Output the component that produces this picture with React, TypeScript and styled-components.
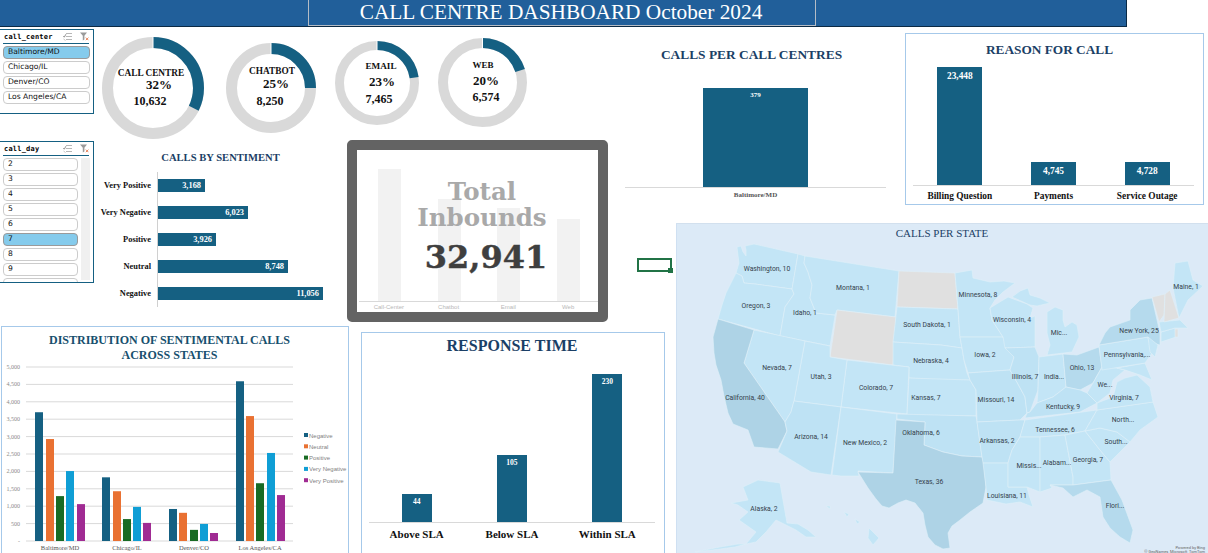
import React from "react";
import styled, { createGlobalStyle } from "styled-components";

const TEAL = "#156082";
const NAVY = "#1b3f66";
const SERIF = `"Liberation Serif", "Times New Roman", serif`;

const Global = createGlobalStyle`
  html, body { margin: 0; padding: 0; background: #fff; overflow: hidden; }
  body { width: 1208px; height: 553px; font-family: ${SERIF}; }
`;

const Page = styled.div`
  width: 1208px;
  height: 553px;
  overflow: hidden;
  display: flex;
  flex-direction: column;
`;

const Banner = styled.header`
  width: 1127px;
  height: 27px;
  box-sizing: border-box;
  flex: none;
  background: #215f9a;
  border-bottom: 1px solid #0b2a45;
  border-right: 1px solid #0b2a45;
  padding-left: 308px;
`;

const BannerTitle = styled.h1`
  margin: 0;
  width: 508px;
  height: 25.5px;
  box-sizing: border-box;
  border: 1px solid #b4bcc6;
  border-top: none;
  padding-right: 2px;
  color: #fff;
  font: 400 21.3px/24px ${SERIF};
  text-align: center;
  white-space: nowrap;
`;

const Board = styled.main`
  display: grid;
  grid-template-columns: 625px 51px 532px;
  grid-template-rows: 196px 102px 228px;
  flex: 1;
  grid-template-areas:
    "left top top"
    "left cell map"
    "bottom bottom map";
`;

const LeftArea = styled.section`
  grid-area: left;
  display: flex;
`;

const SlicerColumn = styled.div`
  width: 94px;
  flex: none;
  padding-top: 2px;
  display: flex;
  flex-direction: column;
  gap: 27px;
`;

const Slicer = styled.div<{ $h: number }>`
  width: 94px;
  height: ${(p) => p.$h}px;
  box-sizing: border-box;
  border: 1px solid ${TEAL};
  border-left: none;
  padding: 0 3px 0 3px;
  overflow: hidden;
  background: #fff;
`;

const SlicerHead = styled.div`
  height: 13px;
  margin-right: 1px;
  border-bottom: 1px solid ${TEAL};
  display: flex;
  align-items: center;
  justify-content: space-between;
  padding-left: 1px;
`;

const SlicerName = styled.span`
  font: 700 7px/10px "DejaVu Sans Mono", monospace;
  letter-spacing: 0.2px;
  color: #000;
`;

const SlicerIcons = styled.span`
  display: flex;
  gap: 8px;
  align-items: center;
`;

const SlicerBody = styled.div`
  display: flex;
  gap: 3px;
  margin-top: 2px;
`;

const SlicerList = styled.div<{ $gap: number }>`
  flex: 1;
  display: flex;
  flex-direction: column;
  gap: ${(p) => p.$gap}px;
`;

const SlicerButton = styled.div<{ $active?: boolean; $h: number }>`
  height: ${(p) => p.$h}px;
  flex: none;
  box-sizing: border-box;
  border: 1px solid ${(p) => (p.$active ? "#9a9a9a" : "#cccccc")};
  border-radius: 4px;
  background: ${(p) => (p.$active ? "#85cbec" : "#fff")};
  padding-left: 4px;
  font: 400 7.6px/10px "DejaVu Sans", sans-serif;
  color: #111;
  white-space: nowrap;
`;

const ScrollTrack = styled.div`
  width: 9px;
  height: 122px;
  flex: none;
  background: #f0f0f0;
`;

const CenterColumn = styled.div`
  flex: 1;
  min-width: 0;
  display: flex;
  flex-direction: column;
`;

const DonutRow = styled.div`
  height: 113px;
  flex: none;
  display: flex;
  align-items: flex-start;
  padding-left: 8px;
`;

const DonutWrap = styled.svg<{ $top: number; $gap: number }>`
  flex: none;
  margin-top: ${(p) => p.$top}px;
  margin-right: ${(p) => p.$gap}px;
  display: block;
`;

const LowerRow = styled.div`
  display: flex;
  flex: 1;
`;

const SentimentPanel = styled.div`
  width: 253px;
  flex: none;
  padding-top: 12px;
`;

const PanelTitle = styled.h2<{ $size: number; $shift?: number }>`
  margin: 0;
  padding-right: ${(p) => p.$shift || 0}px;
  text-align: center;
  font: 700 ${(p) => p.$size}px/1.15 ${SERIF};
  color: ${NAVY};
  white-space: nowrap;
`;

const SentimentChart = styled.div`
  display: grid;
  grid-template-columns: 57px 1fr;
  grid-auto-rows: 27px;
  margin-top: 8px;
`;

const SentimentLabel = styled.div`
  display: flex;
  align-items: center;
  justify-content: flex-end;
  font: 700 8.4px/10px ${SERIF};
  color: #111;
  white-space: nowrap;
`;

const SentimentTrack = styled.div`
  margin-left: 6px;
  border-left: 1px solid #d0d0d0;
  display: flex;
  align-items: center;
`;

const HBar = styled.div<{ $w: number }>`
  width: ${(p) => p.$w}px;
  height: 13px;
  background: ${TEAL};
  color: #fff;
  display: flex;
  align-items: center;
  justify-content: flex-end;
  padding-right: 4px;
  box-sizing: border-box;
  font: 700 8.4px/10px ${SERIF};
`;

const InboundCard = styled.div`
  width: 261px;
  height: 182px;
  flex: none;
  box-sizing: border-box;
  border: 10px solid #636363;
  border-radius: 5px;
  background: #fff;
  position: relative;
  overflow: hidden;
`;

const GhostPlot = styled.div`
  height: 152px;
  margin-left: 2px;
  padding-left: 1px;
  border-bottom: 1px solid #d9d9d9;
  display: grid;
  grid-template-columns: repeat(4, 1fr);
  align-items: end;
  justify-items: center;
  box-sizing: border-box;
`;

const GhostBar = styled.div<{ $h: number }>`
  width: 23px;
  height: ${(p) => p.$h}px;
  background: #f2f2f2;
`;

const GhostLabels = styled.div`
  margin-left: 2px;
  display: grid;
  grid-template-columns: repeat(4, 1fr);
  justify-items: center;
  font: 400 6px/10px "Liberation Sans", Arial, sans-serif;
  color: #b8b8b8;
`;

const InboundOverlay = styled.div`
  position: absolute;
  inset: 0;
  display: flex;
  flex-direction: column;
  align-items: center;
  padding-top: 29px;
`;

const InboundCaption = styled.div`
  margin-left: 9px;
  font: 700 24.5px/25.5px "DejaVu Serif", serif;
  color: #a9a9a9;
  text-align: center;
`;

const InboundValue = styled.div`
  margin-top: 9px;
  margin-left: 17px;
  font: 700 32px/36px "DejaVu Serif", serif;
  color: #3f3f3f;
  -webkit-text-stroke: 0.4px #3f3f3f;
`;

const TopArea = styled.section`
  grid-area: top;
  display: flex;
  gap: 19px;
`;

const CenterChart = styled.div`
  width: 261px;
  flex: none;
  padding-top: 20px;
`;

const ColumnPlot = styled.div<{ $h: number; $top: number }>`
  height: ${(p) => p.$h}px;
  margin-top: ${(p) => p.$top}px;
  border-bottom: 1px solid #d9d9d9;
  display: flex;
  align-items: flex-end;
`;

const ColumnSlot = styled.div`
  flex: 1;
  display: flex;
  justify-content: center;
`;

const ColumnBar = styled.div<{ $w: number; $h: number; $size: number; $pad: number }>`
  width: ${(p) => p.$w}px;
  height: ${(p) => p.$h}px;
  background: ${TEAL};
  color: #fff;
  text-align: center;
  box-sizing: border-box;
  padding-top: ${(p) => p.$pad}px;
  font: 700 ${(p) => p.$size}px/10px ${SERIF};
`;

const AxisLabels = styled.div<{ $size: number; $color: string; $top: number }>`
  display: flex;
  margin-top: ${(p) => p.$top}px;
  font: 700 ${(p) => p.$size}px/1.2 ${SERIF};
  color: ${(p) => p.$color};
`;

const AxisLabel = styled.div`
  flex: 1;
  text-align: center;
  white-space: nowrap;
`;

const ReasonBox = styled.div`
  width: 299px;
  height: 172px;
  flex: none;
  margin-top: 6px;
  box-sizing: border-box;
  border: 1px solid #a6c9ea;
  padding: 8px 9px 0 7px;
`;

const CellArea = styled.div`
  grid-area: cell;
  padding: 35px 0 0 12px;
`;

const ActiveCell = styled.div`
  width: 35px;
  height: 14px;
  box-sizing: border-box;
  border: 2px solid #217346;
  position: relative;
  &::after {
    content: "";
    position: absolute;
    right: -3px;
    bottom: -3px;
    width: 5px;
    height: 5px;
    background: #217346;
  }
`;

const BottomArea = styled.section`
  grid-area: bottom;
  display: flex;
  align-items: flex-start;
  gap: 12px;
  padding-left: 1px;
`;

const DistributionBox = styled.div`
  width: 348px;
  height: 232px;
  flex: none;
  margin-top: 1px;
  box-sizing: border-box;
  border: 1px solid #a6c9ea;
  padding-top: 6px;
  overflow: hidden;
`;

const DistributionTitle = styled.h2`
  margin: 0 0 1px;
  padding-right: 11px;
  text-align: center;
  font: 700 12px/15px ${SERIF};
  color: #17506e;
`;

const ResponseBox = styled.div`
  width: 304px;
  height: 230px;
  flex: none;
  margin-top: 7px;
  box-sizing: border-box;
  border: 1px solid #a6c9ea;
  padding: 4px 9px 0 7px;
`;

const MapPanel = styled.section`
  grid-area: map;
  background: #dceaf7;
  border-top: 1px solid #d2e0ee;
  border-left: 1px solid #cfe0f2;
  overflow: hidden;
`;

const MapSvg = styled.svg`
  display: block;
`;

function FilterIcons() {
  return (
    <SlicerIcons>
      <svg width="9" height="9" viewBox="0 0 9 9" fill="none">
        <path d="M3 1.5h6M3 4.5h6M3 7.5h6" stroke="#a5a5a5" strokeWidth="0.8" />
        <path d="M0.3 4l1 1.2 1.6-3" stroke="#777" strokeWidth="0.8" />
        <path d="M0.5 7l2 1.5" stroke="#aaa" strokeWidth="0.7" />
      </svg>
      <svg width="9" height="9" viewBox="0 0 9 9">
        <path d="M0 0.5h7L4.4 3.7V7.6L2.8 8.4V3.7z" fill="#9a9a9a" />
        <path d="M5.8 5.6l2.6 2.6M8.4 5.6l-2.6 2.6" stroke="#e8865f" strokeWidth="1" />
      </svg>
    </SlicerIcons>
  );
}

type Txt = { t: string; x: number; y: number; s: number };

function Donut(props: {
  d: number;
  w: number;
  pct: number;
  top: number;
  gap: number;
  texts: Txt[];
}) {
  const { d, w, pct, top, gap, texts } = props;
  const r = (d - w) / 2;
  const c = 2 * Math.PI * r;
  return (
    <DonutWrap width={d} height={d} viewBox={`0 0 ${d} ${d}`} $top={top} $gap={gap}>
      <circle cx={d / 2} cy={d / 2} r={r} fill="none" stroke="#d9d9d9" strokeWidth={w} />
      <circle
        cx={d / 2}
        cy={d / 2}
        r={r}
        fill="none"
        stroke={TEAL}
        strokeWidth={w}
        strokeDasharray={`${(c * pct) / 100} ${c}`}
        transform={`rotate(-90 ${d / 2} ${d / 2})`}
      />
      <line x1={d / 2} y1="0" x2={d / 2} y2={w} stroke="#fff" strokeWidth="1" />
      {texts.map((x) => (
        <text
          key={x.t}
          x={x.x}
          y={x.y}
          fontFamily={SERIF}
          fontWeight="700"
          fontSize={x.s}
          textAnchor="middle"
          dominantBaseline="central"
          fill="#111"
        >
          {x.t}
        </text>
      ))}
    </DonutWrap>
  );
}

const DONUTS = [
  { d: 102, w: 11, pct: 32.3, top: 10, gap: 22, texts: [
    { t: "CALL CENTRE", x: 49, y: 36, s: 9.3 },
    { t: "32%", x: 57, y: 47, s: 13 },
    { t: "10,632", x: 48, y: 64, s: 12 },
  ] },
  { d: 90, w: 11, pct: 25, top: 16, gap: 19, texts: [
    { t: "CHATBOT", x: 46, y: 28, s: 9.3 },
    { t: "25%", x: 50, y: 40, s: 13 },
    { t: "8,250", x: 44, y: 58, s: 12 },
  ] },
  { d: 84, w: 9, pct: 22.7, top: 14, gap: 19, texts: [
    { t: "EMAIL", x: 46, y: 25, s: 9.2 },
    { t: "23%", x: 47, y: 40, s: 13 },
    { t: "7,465", x: 44, y: 58, s: 12 },
  ] },
  { d: 89, w: 10, pct: 20, top: 11, gap: 0, texts: [
    { t: "WEB", x: 45, y: 27, s: 9 },
    { t: "20%", x: 48, y: 42, s: 13 },
    { t: "6,574", x: 48, y: 59, s: 12 },
  ] },
];

const SENTIMENT = [
  ["Very Positive", 47, "3,168"],
  ["Very Negative", 90, "6,023"],
  ["Positive", 58, "3,926"],
  ["Neutral", 130, "8,748"],
  ["Negative", 165, "11,056"],
] as const;

const SERIES = ["#156082", "#e97132", "#196b24", "#0f9ed5", "#a02b93"];
const SERIES_NAMES = ["Negative", "Neutral", "Positive", "Very Negative", "Very Positive"];
const GROUPS = [
  { name: "Baltimore/MD", xs: [35, 46, 56, 66, 77], v: [3700, 2930, 1290, 2010, 1060] },
  { name: "Chicago/IL", xs: [102, 113, 123, 133, 143], v: [1830, 1430, 630, 980, 520] },
  { name: "Denver/CO", xs: [169, 179, 190, 200, 210], v: [920, 810, 320, 490, 230] },
  { name: "Los Angeles/CA", xs: [236, 246, 256, 267, 277], v: [4590, 3590, 1660, 2530, 1320] },
];

function DistributionChart() {
  const y0 = 541;
  const k = 174 / 5000;
  const ticks = [5000, 4500, 4000, 3500, 3000, 2500, 2000, 1500, 1000, 500, 0];
  return (
    <svg width="346" height="190" viewBox="2 364 346 190" style={{ display: "block" }}>
      {ticks.map((t) => (
        <g key={t}>
          <line x1="26" x2="293" y1={y0 - t * k} y2={y0 - t * k} stroke="#d9d9d9" strokeWidth="1" />
          <text x="20" y={y0 - t * k + 2} textAnchor="end" fontSize="6" fontFamily={SERIF} fill="#8a8a8a">
            {t === 0 ? "-" : t.toLocaleString("en-US")}
          </text>
        </g>
      ))}
      {GROUPS.map((g) => (
        <g key={g.name}>
          {g.v.map((v, i) => (
            <rect key={i} x={g.xs[i]} y={y0 - v * k} width="8" height={v * k} fill={SERIES[i]} />
          ))}
          <text x={g.xs[2] + 4} y="550" textAnchor="middle" fontSize="6.5" fontFamily={SERIF} fill="#555">
            {g.name}
          </text>
        </g>
      ))}
      {SERIES_NAMES.map((n, i) => (
        <g key={n}>
          <rect x="304" y={433 + i * 11.3} width="4" height="4" fill={SERIES[i]} />
          <text x="309" y={437.5 + i * 11.3} fontSize="6" fontFamily="Liberation Sans, sans-serif" fill="#7f7f7f">
            {n}
          </text>
        </g>
      ))}
    </svg>
  );
}

const L = "#c3e5f6";
const M = "#bee2f4";
const D = "#aed3e6";
const G = "#e0e0e0";
const N = "#b5daed";

const STATES: [string, string][] = [
  [L, "737,247 741,246 743,252 746,256 746,250 745,246 754,244 798,254 792,289 755,284 744,283 742,276 736,273 739,263"],
  [L, "736,273 742,276 744,283 755,284 792,289 794,294 785,307 780,336 718,319 722,305 726,293 731,283"],
  [L, "798,254 805,256 804,263 808,272 812,285 810,298 816,313 835,315 836,310 830,346 780,336 785,307 794,294 792,289"],
  [L, "805,256 899,271 895,317 837,310 835,315 816,313 810,298 812,285 808,272 804,263"],
  [G, "837,310 896,317 893,365 830,357"],
  [G, "899,271 955,273 958,309 897,307"],
  [L, "897,307 958,309 960,337 962,348 941,345 893,342"],
  [L, "893,342 941,345 962,348 964,360 967,373 970,380 940,380 909,378 909,367 893,365"],
  [L, "847,360 909,367 907,414 841,407"],
  [L, "805,341 830,346 830,357 847,360 841,407 794,401"],
  [L, "754,330 805,341 794,401 791,412 785,422 744,363"],
  [D, "718,319 754,330 744,363 785,422 787,431 778,449 754,447 748,430 733,424 728,413 724,396 721,380 716,365 714,353 713,337"],
  [M, "794,401 841,407 831,475 811,472 778,452 787,431 785,422 791,412"],
  [L, "841,407 897,414 893,473 858,471 859,476 841,476 832,475"],
  [L, "909,378 970,380 976,390 976,416 907,415"],
  [M, "897,414 976,416 977,421 982,457 962,456 943,452 924,445 925,422 897,419"],
  [D, "896,420 925,422 924,445 943,452 962,456 982,457 984,463 986,487 983,503 970,512 960,520 952,526 948,533 950,548 943,549 935,545 928,537 925,525 923,513 915,503 906,500 898,503 889,508 882,506 876,499 868,488 858,472 893,473"],
  [L, "955,273 972,270 973,278 990,282 1004,281 1015,283 1003,292 995,300 990,308 992,320 1003,337 960,337 958,309"],
  [L, "960,337 1003,337 1007,347 1014,357 1010,370 968,373 964,360 962,348"],
  [M, "968,373 1010,370 1018,384 1025,397 1027,413 1020,420 977,422 976,390 970,380"],
  [M, "977,422 1020,420 1025,420 1020,437 1012,450 1008,463 983,463 982,457"],
  [L, "983,463 1008,463 1008,487 1027,487 1029,495 1033,507 1020,502 1006,504 987,500 986,487"],
  [L, "990,308 1008,297 1027,304 1033,308 1030,318 1035,316 1035,330 1035,347 1005,348 1003,337 992,320"],
  [L, "1012,297 1020,291 1028,288 1030,295 1040,298 1050,303 1037,306 1030,305"],
  [L, "1047,312 1055,307 1063,310 1063,320 1065,327 1072,322 1077,325 1079,337 1072,352 1047,355 1050,345 1047,333"],
  [M, "1005,348 1035,347 1039,357 1038,390 1030,412 1027,413 1025,397 1018,384 1010,370 1014,357"],
  [L, "1039,357 1063,354 1066,387 1053,397 1037,403 1038,390"],
  [N, "1063,354 1077,355 1099,347 1102,367 1093,383 1080,390 1066,387"],
  [M, "1037,403 1053,397 1066,387 1080,390 1087,393 1097,403 1080,412 1025,418 1027,413 1030,412"],
  [L, "1025,420 1097,410 1085,431 1065,435 1040,437 1020,437"],
  [L, "1020,437 1040,437 1040,492 1027,487 1008,487 1008,463 1012,450"],
  [L, "1040,437 1065,435 1073,477 1073,485 1050,485 1052,488 1040,492"],
  [L, "1065,435 1085,431 1100,450 1110,462 1111,480 1073,485 1073,477"],
  [N, "1050,485 1073,485 1111,480 1122,500 1133,530 1130,543 1120,537 1110,528 1103,517 1100,497 1087,490 1073,497 1063,488"],
  [L, "1085,431 1100,428 1117,432 1130,442 1110,462 1100,450"],
  [L, "1097,410 1153,402 1158,417 1140,430 1130,442 1117,432 1100,428 1085,431"],
  [L, "1097,403 1113,397 1117,382 1125,378 1137,375 1150,387 1153,402 1097,410"],
  [L, "1102,367 1117,368 1125,370 1113,380 1110,393 1097,403 1087,393 1093,383"],
  [L, "1117,368 1145,363 1152,380 1140,375 1125,370"],
  [L, "1099,345 1148,337 1153,352 1145,363 1102,370"],
  [N, "1110,327 1130,320 1130,310 1140,300 1152,298 1160,333 1160,345 1149,342 1148,337 1099,345 1105,333"],
  [L, "1148,337 1158,345 1155,357 1150,352"],
  [L, "1161,332 1175,328 1176,337 1161,342"],
  [L, "1159,322 1180,320 1188,328 1175,328 1161,332"],
  [G, "1152,297 1165,294 1164,315 1159,322"],
  [G, "1165,294 1170,290 1179,318 1164,322"],
  [G, "1175,329 1178,329 1178,337 1175,337"],
  [L, "1173,288 1175,263 1188,261 1193,280 1203,286 1188,300 1179,318"],
  [L, "743,487 758,480 780,483 787,523 798,524 808,530 816,537 806,537 796,530 776,520 766,532 756,542 746,544 756,532 739,520 748,512 738,505 731,503 748,500"],
  [L, "869,528 879,538 873,545 868,538"],
  [L, "826,506 830,506 830,509"],
  [L, "844,512 849,514 847,517"],
  [L, "855,519 860,522 857,524"],
  [L, "746,544 735,547 720,549 695,552 720,547 738,544"],
];

const LABELS: [string, number, number][] = [
  ["Washington, 10", 767, 269], ["Oregon, 3", 756, 306], ["Idaho, 1", 805, 313], ["Montana, 1", 853, 288],
  ["South Dakota, 1", 927, 325], ["Nebraska, 4", 931, 361], ["Nevada, 7", 777, 368], ["Utah, 3", 821, 377],
  ["Colorado, 7", 876, 388], ["Kansas, 7", 926, 398], ["California, 40", 745, 398], ["Arizona, 14", 811, 437],
  ["New Mexico, 2", 865, 443], ["Oklahoma, 6", 921, 433], ["Texas, 36", 929, 482], ["Alaska, 2", 764, 509],
  ["Minnesota, 8", 978, 295], ["Wisconsin, 4", 1012, 320], ["Mic...", 1059, 333], ["Maine, 1", 1186, 287],
  ["New York, 25", 1139, 331], ["Pennsylvania,...", 1127, 355], ["Iowa, 2", 985, 355], ["Ohio, 13", 1082, 368],
  ["India...", 1054, 377], ["Illinois, 7", 1025, 377], ["We...", 1105, 385], ["Missouri, 14", 996, 400],
  ["Kentucky, 9", 1063, 407], ["Virginia, 7", 1124, 398], ["North...", 1123, 420], ["Tennessee, 6", 1055, 430],
  ["Arkansas, 2", 997, 441], ["South...", 1116, 442], ["Missis...", 1029, 466], ["Alabam...", 1057, 463],
  ["Georgia, 7", 1088, 460], ["Louisiana, 11", 1007, 496], ["Flori...", 1115, 506],
];

function UsMap() {
  return (
    <MapSvg width="531" height="329" viewBox="677 224 531 329">
      {STATES.map(([fill, pts], i) => (
        <polygon key={i} points={pts} fill={fill} stroke="#dff0f9" strokeWidth="0.6" strokeLinejoin="round" />
      ))}
      <text x="942" y="237" textAnchor="middle" fontFamily={SERIF} fontSize="11" fill={NAVY}>
        CALLS PER STATE
      </text>
      {LABELS.map(([t, x, y]) => (
        <text
          key={t}
          x={x}
          y={y}
          textAnchor="middle"
          dominantBaseline="central"
          fontFamily="Roboto, sans-serif"
          fontSize="6.8"
          fill="#35424c"
        >
          {t}
        </text>
      ))}
      <text x="1205" y="549" textAnchor="end" fontFamily="Roboto, sans-serif" fontSize="4" fill="#666">
        Powered by Bing
      </text>
      <text x="1205" y="553" textAnchor="end" fontFamily="Roboto, sans-serif" fontSize="4" fill="#666">
        © GeoNames, Microsoft, TomTom
      </text>
    </MapSvg>
  );
}

const CENTERS = ["Baltimore/MD", "Chicago/IL", "Denver/CO", "Los Angeles/CA"];
const DAYS = ["2", "3", "4", "5", "6", "7", "8", "9", ""];

export default function App() {
  return (
    <Page>
      <Global />
      <Banner>
        <BannerTitle>CALL CENTRE DASHBOARD October 2024</BannerTitle>
      </Banner>
      <Board>
        <LeftArea>
          <SlicerColumn>
            <Slicer $h={85}>
              <SlicerHead>
                <SlicerName>call_center</SlicerName>
                <FilterIcons />
              </SlicerHead>
              <SlicerBody>
                <SlicerList $gap={2}>
                  {CENTERS.map((c, i) => (
                    <SlicerButton key={c} $h={13} $active={i === 0}>
                      {c}
                    </SlicerButton>
                  ))}
                </SlicerList>
              </SlicerBody>
            </Slicer>
            <Slicer $h={142}>
              <SlicerHead>
                <SlicerName>call_day</SlicerName>
                <FilterIcons />
              </SlicerHead>
              <SlicerBody>
                <SlicerList $gap={2}>
                  {DAYS.map((d, i) => (
                    <SlicerButton key={i} $h={13} $active={d === "7"}>
                      {d}
                    </SlicerButton>
                  ))}
                </SlicerList>
                <ScrollTrack />
              </SlicerBody>
            </Slicer>
          </SlicerColumn>
          <CenterColumn>
            <DonutRow>
              {DONUTS.map((d) => (
                <Donut key={d.d} {...d} />
              ))}
            </DonutRow>
            <LowerRow>
              <SentimentPanel>
                <PanelTitle $size={10.6}>CALLS BY SENTIMENT</PanelTitle>
                <SentimentChart>
                  {SENTIMENT.map(([name, w, v]) => (
                    <React.Fragment key={name}>
                      <SentimentLabel>{name}</SentimentLabel>
                      <SentimentTrack>
                        <HBar $w={w}>{v}</HBar>
                      </SentimentTrack>
                    </React.Fragment>
                  ))}
                </SentimentChart>
              </SentimentPanel>
              <InboundCard>
                <GhostPlot>
                  <GhostBar $h={132} />
                  <GhostBar $h={102} />
                  <GhostBar $h={93} />
                  <GhostBar $h={82} />
                </GhostPlot>
                <GhostLabels>
                  <span>Call-Center</span>
                  <span>Chatbot</span>
                  <span>Email</span>
                  <span>Web</span>
                </GhostLabels>
                <InboundOverlay>
                  <InboundCaption>
                    Total
                    <br />
                    Inbounds
                  </InboundCaption>
                  <InboundValue>32,941</InboundValue>
                </InboundOverlay>
              </InboundCard>
            </LowerRow>
          </CenterColumn>
        </LeftArea>
        <TopArea>
          <CenterChart>
            <PanelTitle $size={13.4} $shift={8}>CALLS PER CALL CENTRES</PanelTitle>
            <ColumnPlot $h={100} $top={25}>
              <ColumnSlot>
                <ColumnBar $w={105} $h={99} $size={7} $pad={2}>
                  379
                </ColumnBar>
              </ColumnSlot>
            </ColumnPlot>
            <AxisLabels $size={7} $color="#555" $top={3}>
              <AxisLabel>Baltimore/MD</AxisLabel>
            </AxisLabels>
          </CenterChart>
          <ReasonBox>
            <PanelTitle $size={13.3} $shift={8}>REASON FOR CALL</PanelTitle>
            <ColumnPlot $h={119} $top={9}>
              <ColumnSlot>
                <ColumnBar $w={45} $h={118} $size={9.4} $pad={4}>
                  23,448
                </ColumnBar>
              </ColumnSlot>
              <ColumnSlot>
                <ColumnBar $w={45} $h={23} $size={9.4} $pad={4}>
                  4,745
                </ColumnBar>
              </ColumnSlot>
              <ColumnSlot>
                <ColumnBar $w={45} $h={23} $size={9.4} $pad={4}>
                  4,728
                </ColumnBar>
              </ColumnSlot>
            </ColumnPlot>
            <AxisLabels $size={9.4} $color="#111" $top={5}>
              <AxisLabel>Billing Question</AxisLabel>
              <AxisLabel>Payments</AxisLabel>
              <AxisLabel>Service Outage</AxisLabel>
            </AxisLabels>
          </ReasonBox>
        </TopArea>
        <CellArea>
          <ActiveCell />
        </CellArea>
        <BottomArea>
          <DistributionBox>
            <DistributionTitle>
              DISTRIBUTION OF SENTIMENTAL CALLS
              <br />
              ACROSS STATES
            </DistributionTitle>
            <DistributionChart />
          </DistributionBox>
          <ResponseBox>
            <PanelTitle $size={16}>RESPONSE TIME</PanelTitle>
            <ColumnPlot $h={165} $top={2}>
              <ColumnSlot>
                <ColumnBar $w={30} $h={28} $size={7.5} $pad={3}>
                  44
                </ColumnBar>
              </ColumnSlot>
              <ColumnSlot>
                <ColumnBar $w={30} $h={67} $size={7.5} $pad={3}>
                  105
                </ColumnBar>
              </ColumnSlot>
              <ColumnSlot>
                <ColumnBar $w={30} $h={148} $size={7.5} $pad={3}>
                  230
                </ColumnBar>
              </ColumnSlot>
            </ColumnPlot>
            <AxisLabels $size={11} $color="#111" $top={5}>
              <AxisLabel>Above SLA</AxisLabel>
              <AxisLabel>Below SLA</AxisLabel>
              <AxisLabel>Within SLA</AxisLabel>
            </AxisLabels>
          </ResponseBox>
        </BottomArea>
        <MapPanel>
          <UsMap />
        </MapPanel>
      </Board>
    </Page>
  );
}
